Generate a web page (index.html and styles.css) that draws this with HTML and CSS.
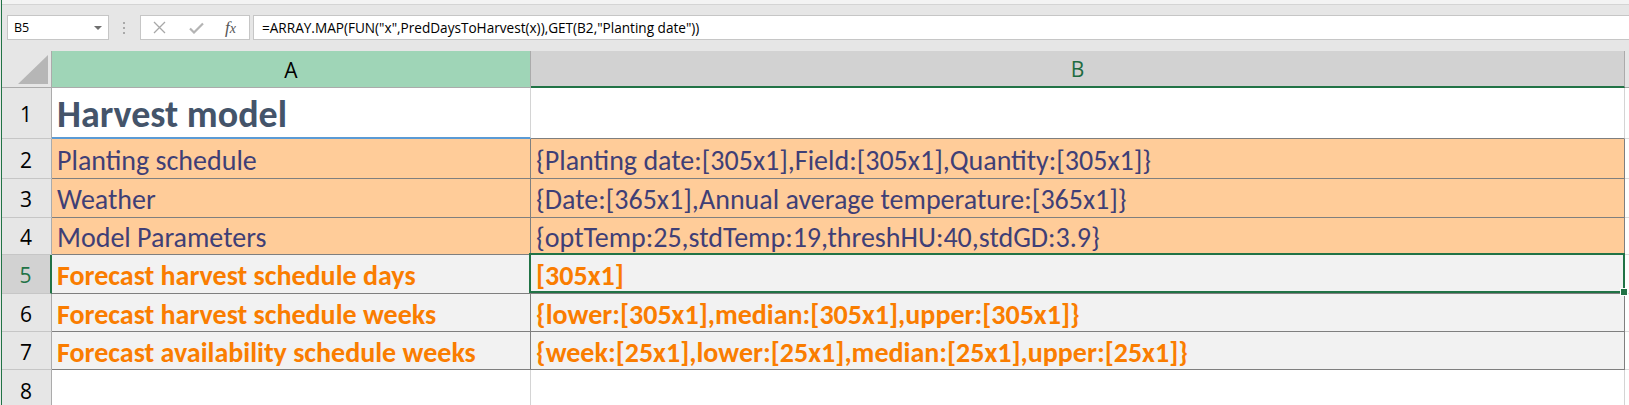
FILE: index.html
```html
<!DOCTYPE html>
<html>
<head>
<meta charset="utf-8">
<link rel="stylesheet" href="styles.css">
</head>
<body>
<div class="app">
  <div class="topstrip"></div>
  <div class="fbar">
    <div class="namebox">
      <span class="nb-text">B5</span>
      <svg class="nb-arrow" width="8" height="4" viewBox="0 0 8 4"><polygon points="0,0 8,0 4,4" fill="#6f6f6f"/></svg>
    </div>
    <div class="dots">
      <svg width="3" height="12" viewBox="0 0 3 12"><rect x="0" y="0" width="2" height="2" fill="#a9a9a9"/><rect x="0" y="5" width="2" height="2" fill="#a9a9a9"/><rect x="0" y="10" width="2" height="2" fill="#a9a9a9"/></svg>
    </div>
    <div class="fxbox">
      <svg class="ic-x" width="13" height="13" viewBox="0 0 13 13"><path d="M1 1 L12 12 M12 1 L1 12" stroke="#a8a8a8" stroke-width="1.3" fill="none"/></svg>
      <svg class="ic-ok" width="15" height="12" viewBox="0 0 15 12"><path d="M1 6.5 L5 10.5 L14 1.5" stroke="#b4b4b4" stroke-width="2.2" fill="none"/></svg>
      <span class="fx"><i>f</i><i class="fx-x">x</i></span>
    </div>
    <div class="formula">=ARRAY.MAP(FUN("x",PredDaysToHarvest(x)),GET(B2,"Planting date"))</div>
  </div>
  <div class="sheet">
    <div class="corner"><svg width="30" height="29" viewBox="0 0 30 29"><polygon points="0,29 30,29 30,0" fill="#b6b6b6"/></svg></div>
    <div class="colhdr col-a">A</div>
    <div class="colhdr col-b">B</div>
    <div class="colhdr col-c"></div>

    <div class="rowhdr">1</div>
    <div class="cell title">Harvest model</div>
    <div class="cell plain b1"></div>
    <div class="cell rest"></div>

    <div class="rowhdr">2</div>
    <div class="cell input">Planting schedule</div>
    <div class="cell input">{Planting date:[305x1],Field:[305x1],Quantity:[305x1]}</div>
    <div class="cell rest"></div>

    <div class="rowhdr">3</div>
    <div class="cell input">Weather</div>
    <div class="cell input">{Date:[365x1],Annual average temperature:[365x1]}</div>
    <div class="cell rest"></div>

    <div class="rowhdr">4</div>
    <div class="cell input">Model Parameters</div>
    <div class="cell input">{optTemp:25,stdTemp:19,threshHU:40,stdGD:3.9}</div>
    <div class="cell rest"></div>

    <div class="rowhdr sel">5</div>
    <div class="cell calc">Forecast harvest schedule days</div>
    <div class="cell calc active">[305x1]<div class="selbox"></div><div class="handle"></div></div>
    <div class="cell rest"></div>

    <div class="rowhdr">6</div>
    <div class="cell calc">Forecast harvest schedule weeks</div>
    <div class="cell calc">{lower:[305x1],median:[305x1],upper:[305x1]}</div>
    <div class="cell rest"></div>

    <div class="rowhdr">7</div>
    <div class="cell calc">Forecast availability schedule weeks</div>
    <div class="cell calc">{week:[25x1],lower:[25x1],median:[25x1],upper:[25x1]}</div>
    <div class="cell rest"></div>

    <div class="rowhdr">8</div>
    <div class="cell plain"></div>
    <div class="cell plain"></div>
    <div class="cell rest"></div>
  </div>
</div>
</body>
</html>
```
FILE: styles.css
```css
html, body {
  margin: 0;
  padding: 0;
  background: #ffffff;
  overflow: hidden;
}
.app {
  width: 1629px;
  height: 405px;
  overflow: hidden;
  box-sizing: border-box;
  border-left: 1px solid #e8e8e8;
  position: relative;
  background: #e6e6e6;
}
.app::before {
  content: "";
  position: absolute;
  left: 0;
  top: 0;
  bottom: 0;
  width: 1px;
  background: #217346;
  z-index: 5;
}
.topstrip {
  height: 4px;
  background: #f3f3f3;
  border-bottom: 1px solid #d4d4d4;
}
.fbar {
  height: 46px;
  box-sizing: border-box;
  padding: 10px 0 11px 6px;
  display: flex;
  align-items: stretch;
  background: #e6e6e6;
  font-family: "Open Sans", "Noto Sans", sans-serif;
}
.namebox {
  width: 102px;
  box-sizing: border-box;
  background: #fff;
  border: 1px solid #c6c6c6;
  display: flex;
  align-items: center;
  justify-content: space-between;
  padding: 0 6px 0 6px;
}
.nb-text {
  font-size: 12.5px;
  color: #000;
}
.nb-arrow {
  display: block;
}
.dots {
  width: 31px;
  display: flex;
  align-items: center;
  justify-content: center;
}
.dots svg { display: block; }
.fxbox {
  width: 110px;
  box-sizing: border-box;
  background: #fff;
  border: 1px solid #c6c6c6;
  display: flex;
  align-items: center;
  padding-left: 12px;
}
.ic-x { display: block; }
.ic-ok { display: block; margin-left: 23px; }
.fx {
  margin-left: 21px;
  font-family: "Liberation Serif", "DejaVu Serif", serif;
  font-size: 17px;
  color: #555555;
  letter-spacing: 0;
}
.fx i { font-style: italic; }
.fx-x { font-size: 14px; }
.formula {
  flex: 1;
  margin-left: 3px;
  background: #fff;
  border: 1px solid #c6c6c6;
  border-right: none;
  display: flex;
  align-items: center;
  padding-left: 8px;
  font-size: 13.6px;
  color: #000;
  white-space: nowrap;
}
.sheet {
  display: grid;
  grid-template-columns: 51px 479px 1094px 1fr;
  grid-template-rows: 37px 51px 40px 39px 37px 39px 38px 38px 40px;
  background: #fff;
}
.corner {
  background: #e6e6e6;
  border-right: 1px solid #ababab;
  border-bottom: 1px solid #ababab;
  display: flex;
  align-items: flex-end;
  justify-content: flex-end;
  padding: 0 3px 3px 0;
}
.corner svg { display: block; }
.colhdr {
  font-family: "Open Sans", "Noto Sans", sans-serif;
  font-size: 21px;
  display: flex;
  align-items: center;
  justify-content: center;
  border-right: 1px solid #ababab;
  border-bottom: 1px solid #ababab;
  color: #000;
  padding-top: 1px;
  box-sizing: border-box;
}
.col-a { background: #9fd5b7; }
.col-b {
  background: #d2d2d2;
  color: #1e6b41;
  border-bottom: 2px solid #217346;
}
.col-c { background: #e6e6e6; border-right: none; }
.rowhdr {
  font-family: "Open Sans", "Noto Sans", sans-serif;
  font-size: 21px;
  background: #e6e6e6;
  border-right: 1px solid #ababab;
  border-bottom: 1px solid #c6c6c6;
  display: flex;
  align-items: center;
  justify-content: center;
  color: #000;
  box-sizing: border-box;
  padding-top: 2px;
}
.rowhdr.sel {
  background: #d2d2d2;
  color: #217346;
  border-right: 2px solid #217346;
}
.cell {
  box-sizing: border-box;
  border-right: 1px solid #d4d4d4;
  border-bottom: 1px solid #d4d4d4;
  display: flex;
  align-items: center;
  padding: 3px 0 0 5px;
  font-family: Carlito, Lato, sans-serif;
  font-size: 28px;
  white-space: nowrap;
  overflow: visible;
  position: relative;
}
.cell.title {
  font-weight: bold;
  font-size: 38px;
  color: #44546a;
  border-bottom: 2px solid #5b9bd5;
  padding-top: 3px;
}
.cell.b1 { border-bottom-color: #7f7f7f; }
.cell.input {
  background: #ffcc99;
  color: #3f3f76;
  border-right-color: #7f7f7f;
  border-bottom-color: #7f7f7f;
}
.cell.calc {
  background: #f2f2f2;
  color: #fa7d00;
  font-weight: bold;
  border-right-color: #7f7f7f;
  border-bottom-color: #7f7f7f;
}
.cell.rest {
  border-right: none;
  border-bottom-color: #dcdcdc;
}
.selbox {
  position: absolute;
  left: -2px;
  top: -2px;
  right: -1px;
  bottom: 0;
  border: 2px solid #217346;
  pointer-events: none;
  z-index: 3;
}
.handle {
  position: absolute;
  right: -3px;
  bottom: -2px;
  width: 6px;
  height: 6px;
  background: #217346;
  box-shadow: 0 0 0 1px #ffffff;
  z-index: 4;
}
```
